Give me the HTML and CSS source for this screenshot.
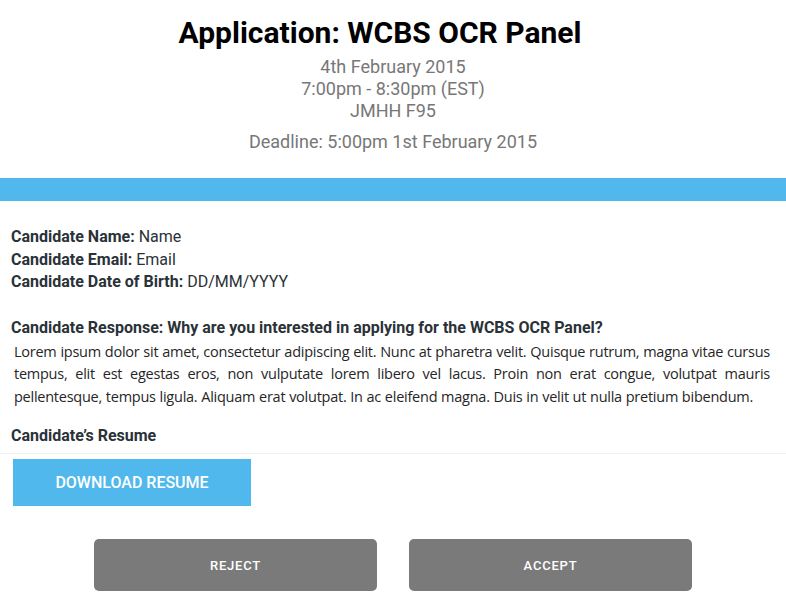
FILE: index.html
```html
<!DOCTYPE html>
<html>
<head>
<meta charset="utf-8">
<link rel="stylesheet" href="styles.css">
</head>
<body>
<header class="header">
  <h1 class="title">Application: WCBS OCR Panel</h1>
  <div class="details">
    <div>4th February 2015</div>
    <div>7:00pm - 8:30pm (EST)</div>
    <div>JMHH F95</div>
  </div>
  <div class="deadline">Deadline: 5:00pm 1st February 2015</div>
</header>
<div class="bar"></div>
<main class="content">
  <div class="info">
    <div><b>Candidate Name:</b> Name</div>
    <div><b>Candidate Email:</b> Email</div>
    <div><b>Candidate Date of Birth:</b> DD/MM/YYYY</div>
  </div>
  <div class="question">Candidate Response: Why are you interested in applying for the WCBS OCR Panel?</div>
  <p class="answer">Lorem ipsum dolor sit amet, consectetur adipiscing elit. Nunc at pharetra velit. Quisque rutrum, magna vitae cursus tempus, elit est egestas eros, non vulputate lorem libero vel lacus. Proin non erat congue, volutpat mauris pellentesque, tempus ligula. Aliquam erat volutpat. In ac eleifend magna. Duis in velit ut nulla pretium bibendum.</p>
  <div class="resume-label">Candidate’s Resume</div>
  <div class="resume-row">
    <button class="download">DOWNLOAD RESUME</button>
  </div>
  <div class="actions">
    <button class="action">REJECT</button>
    <button class="action">ACCEPT</button>
  </div>
</main>
</body>
</html>
```
FILE: styles.css
```css
* { box-sizing: border-box; }
html, body { margin: 0; padding: 0; background: #fff; }
body { font-family: Roboto, "Liberation Sans", sans-serif; width: 786px; }
.header { text-align: center; padding-top: 14px; height: 178px; }
.title { margin: 0; font-size: 30px; font-weight: 700; color: #000; line-height: 38px; padding-right: 26px; }
.details { margin-top: 4px; font-size: 18px; line-height: 22px; color: #777; }
.deadline { margin-top: 9px; font-size: 18px; line-height: 22px; color: #777; }
.bar { height: 23px; background: #50b8ec; }
.content { padding: 25px 0 0 11px; color: #2a3238; font-size: 16px; }
.info { line-height: 22.5px; }
.info b { font-weight: 700; }
.question { margin-top: 23px; font-weight: 700; line-height: 22px; }
.answer { margin: 2px 16px 0 3px; font-family: "Open Sans", sans-serif; font-size: 14.5px; line-height: 22.5px; text-align: justify; color: #262626; letter-spacing: -0.25px; word-spacing: 0.3px; }
.resume-label { margin-top: 17px; font-weight: 700; line-height: 22px; }
.resume-row { margin-left: -11px; border-top: 1px solid #f2f2f2; margin-top: 6px; padding: 5px 0 0 13px; }
.download { display: block; width: 238px; height: 47px; border: 0; background: #50b8ec; color: #fff; font-family: Roboto, sans-serif; font-size: 16px; font-weight: 500; padding: 0; }
.actions { display: flex; gap: 32px; margin: 33px 0 0 83px; }
.action { width: 283px; height: 52px; border: 0; border-radius: 5px; background: #7a7a7a; color: #fff; font-family: Roboto, sans-serif; font-size: 13px; font-weight: 500; letter-spacing: 0.8px; padding: 0; }
```
